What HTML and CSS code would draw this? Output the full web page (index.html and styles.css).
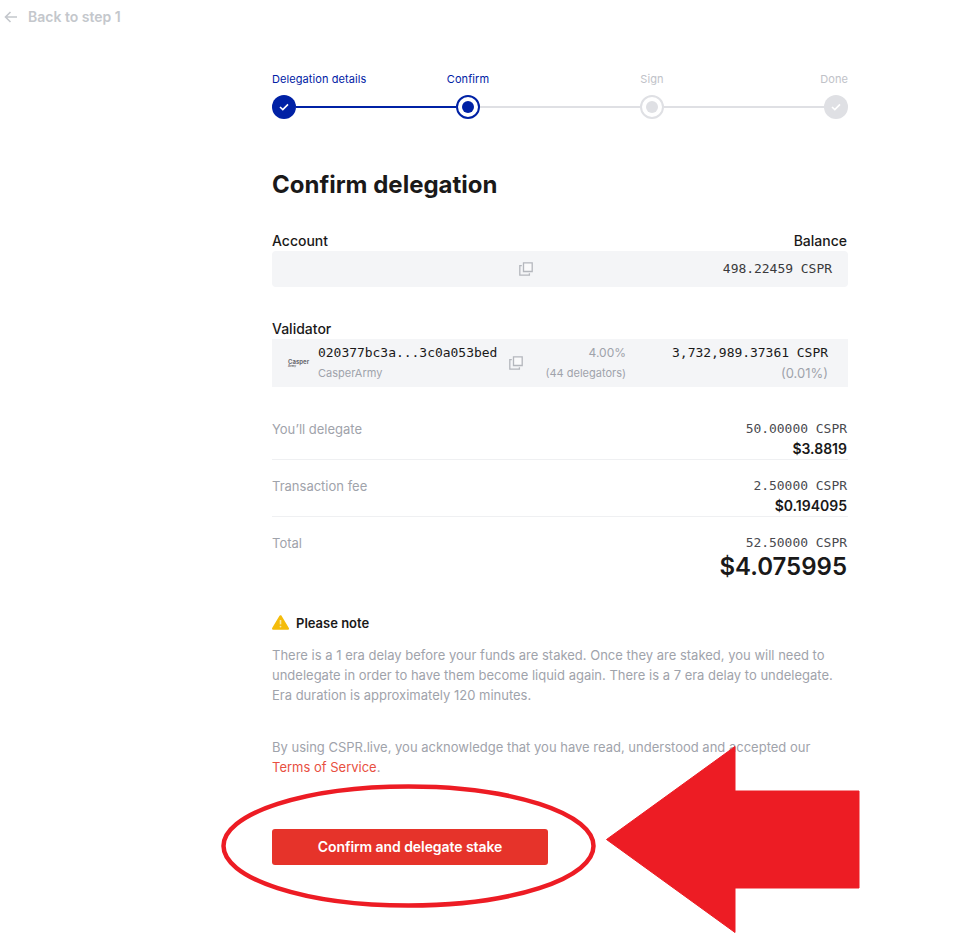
FILE: index.html
```html
<!DOCTYPE html>
<html lang="en">
<head>
<meta charset="utf-8">
<title>Confirm delegation</title>
<link rel="stylesheet" href="styles.css">
</head>
<body>
<a class="back" href="#">
  <svg class="back-icon" width="14" height="12" viewBox="0 0 14 12"><path d="M13 6H1.5M6.5 1 1.5 6l5 5" fill="none" stroke="#c4c7cc" stroke-width="1.6"/></svg>
  <span>Back to step 1</span>
</a>
<main class="page">
  <section class="stepper">
    <div class="step-labels">
      <div class="step-label first active">Delegation details</div>
      <div class="step-label active">Confirm</div>
      <div class="step-label">Sign</div>
      <div class="step-label last">Done</div>
    </div>
    <div class="track">
      <span class="dot done"><svg width="10" height="8" viewBox="0 0 10 8"><path d="M1 4l2.8 2.6L9 1.4" fill="none" stroke="#fff" stroke-width="1.6"/></svg></span>
      <span class="line line-on"></span>
      <span class="dot current"><i></i></span>
      <span class="line"></span>
      <span class="dot pending"><i></i></span>
      <span class="line"></span>
      <span class="dot future"><svg width="10" height="8" viewBox="0 0 10 8"><path d="M1 4l2.8 2.6L9 1.4" fill="none" stroke="#fff" stroke-width="1.6"/></svg></span>
    </div>
  </section>

  <h1 class="title">Confirm delegation</h1>

  <div class="label-row"><span>Account</span><span>Balance</span></div>
  <div class="panel account">
    <span class="account-copy">
      <svg class="copy" width="14" height="14" viewBox="0 0 14 14"><path d="M4.500.8h8.700v8.700H4.500z" fill="#fafafb" stroke="#b4b7bd" stroke-width="1.3"/><path d="M2.800 3.600H.8v9.600h9.600v-2" fill="none" stroke="#b4b7bd" stroke-width="1.3"/></svg>
    </span>
    <span class="mono account-balance">498.22459 CSPR</span>
  </div>

  <div class="label-row validator-label"><span>Validator</span></div>
  <div class="panel validator">
    <div class="logo"><span class="logo-a">Casper</span><span class="logo-b">Army</span></div>
    <div class="val-id">
      <div class="mono dark">020377bc3a...3c0a053bed</div>
      <div class="muted small">CasperArmy</div>
    </div>
    <svg class="copy val-copy" width="14" height="14" viewBox="0 0 14 14"><path d="M4.500.8h8.700v8.700H4.500z" fill="#fafafb" stroke="#b4b7bd" stroke-width="1.3"/><path d="M2.800 3.600H.8v9.600h9.600v-2" fill="none" stroke="#b4b7bd" stroke-width="1.3"/></svg>
    <div class="val-fee">
      <div class="muted">4.00%</div>
      <div class="muted small">(44 delegators)</div>
    </div>
    <div class="val-stake">
      <div class="mono dark">3,732,989.37361 CSPR</div>
      <div class="muted">(0.01%)</div>
    </div>
  </div>

  <div class="rows">
    <div class="row ruled">
      <span class="muted">You’ll delegate</span>
      <div class="amount"><div class="mono">50.00000 CSPR</div><div class="usd">$3.8819</div></div>
    </div>
    <div class="row ruled">
      <span class="muted">Transaction fee</span>
      <div class="amount"><div class="mono">2.50000 CSPR</div><div class="usd">$0.194095</div></div>
    </div>
    <div class="row">
      <span class="muted">Total</span>
      <div class="amount"><div class="mono">52.50000 CSPR</div><div class="usd total">$4.075995</div></div>
    </div>
  </div>

  <div class="note-head">
    <svg class="note-icon" width="17" height="15" viewBox="0 0 17 15"><path d="M8.500 1.400 15.800 13.600H1.200z" fill="#f4bc0b" stroke="#f4bc0b" stroke-width="2.4" stroke-linejoin="round"/><path d="M8.500 5v4.400" stroke="#fbe7a6" stroke-width="1.6"/><circle cx="8.500" cy="11.600" r=".9" fill="#fbe7a6"/></svg>
    <span>Please note</span>
  </div>
  <p class="text note-text">There is a 1 era delay before your funds are staked. Once they are staked, you will need to undelegate in order to have them become liquid again. There is a 7 era delay to undelegate. Era duration is approximately 120 minutes.</p>
  <p class="text terms">By using CSPR.live, you acknowledge that you have read, understood and accepted our <a href="#">Terms of Service</a>.</p>
  <button class="confirm" type="button">Confirm and delegate stake</button>
</main>
<svg class="annotation" width="968" height="938" viewBox="0 0 968 938">
  <ellipse cx="408.5" cy="846" rx="185" ry="59.5" fill="none" stroke="#ed1c24" stroke-width="4.5"/>
  <path d="M606.500 839.500 735 746.500V791h124v97H735v44.500z" fill="#ed1c24" stroke="#ed1c24" stroke-width="1" stroke-linejoin="round"/>
</svg>
</body>
</html>
```
FILE: styles.css
```css
* { box-sizing: border-box; }
html, body { margin: 0; height: 938px; overflow: hidden; }
body { position: relative; background: #fff; font-family: Inter, "Noto Sans", sans-serif; font-size: 13px; line-height: 20px; color: #1a1919; }
.back { display: flex; align-items: center; gap: 10px; height: 20px; margin: 7px 0 0 4px; font-size: 14px; font-weight: 600; color: #c4c7cc; text-decoration: none; }
.page { width: 576px; margin: 42px 0 0 272px; }
.step-labels { display: flex; justify-content: space-between; height: 20px; }
.step-label { width: 24px; display: flex; justify-content: center; white-space: nowrap; font-size: 11px; font-weight: 400; line-height: 20px; letter-spacing: .08px; color: #c0c2c8; }
.step-label.first { justify-content: flex-start; }
.step-label.last { justify-content: flex-end; }
.step-label.active { color: #0021a5; }
.track { display: flex; align-items: center; height: 24px; margin-top: 6px; }
.line { flex: 1; height: 2px; background: #dfe0e4; }
.line-on { background: #0021a5; }
.dot { width: 24px; height: 24px; border-radius: 50%; display: flex; align-items: center; justify-content: center; flex: none; }
.dot.done { background: #0021a5; }
.dot.future { background: #dfe0e4; }
.dot.current { border: 2px solid #0021a5; }
.dot.current i { width: 12px; height: 12px; border-radius: 50%; background: #0021a5; }
.dot.pending { border: 2px solid #dfe0e4; }
.dot.pending i { width: 12px; height: 12px; border-radius: 50%; background: #dfe0e4; }
.title { margin: 50px 0 0; font-size: 24px; font-weight: 700; line-height: 32px; color: #1a1919; }
.label-row { display: flex; justify-content: space-between; margin-top: 30px; height: 20px; font-size: 14px; font-weight: 500; line-height: 20px; padding-right: 1px; }
.validator-label { margin-top: 32px; }
.panel { background: #f4f5f7; border-radius: 4px; display: flex; align-items: center; }
.account { height: 36px; margin-top: 0; }
.account-copy { width: 261px; display: flex; justify-content: flex-end; }
.account-balance { margin-left: auto; padding-right: 16px; color: #3a3a3c; }
.validator { height: 48px; border-radius: 0; }
.logo { width: 46px; padding-left: 16px; display: flex; flex-direction: column; gap: 1px; font-size: 6px; line-height: 5px; font-weight: 700; color: #6a6a70; }
.logo-b { font-size: 3px; line-height: 3px; }
.val-id { width: 190px; }
.val-copy { margin-left: 1px; }
.val-fee { width: 103px; text-align: right; font-size: 12px; }
.val-stake { flex: 1; text-align: right; padding-right: 20px; }
.mono { font-family: "DejaVu Sans Mono", "Liberation Mono", monospace; font-size: 13px; line-height: 20px; letter-spacing: -.03px; }
.dark { color: #1a1919; }
.muted { color: #9fa3ab; }
.small { font-size: 11px; }
.rows { margin-top: 32px; }
.row { display: flex; justify-content: space-between; align-items: flex-start; }
.row.ruled { height: 41px; margin-bottom: 16px; border-bottom: 1px solid #eff0f2; }
.amount { text-align: right; color: #4a4a4f; padding-right: 1px; }
.usd { font-size: 14px; font-weight: 600; line-height: 20px; color: #1a1919; }
.usd.total { font-size: 24px; line-height: 28px; }
.note-head { display: flex; align-items: center; gap: 7px; margin-top: 32px; height: 20px; font-size: 13px; font-weight: 600; }
.note-icon { margin-top: -2px; }
.text { margin: 0; color: #9fa3ab; font-size: 13px; line-height: 20px; }
.note-text { margin-top: 12px; }
.terms { margin-top: 32px; }
.terms a { color: #e8503f; text-decoration: none; }
.confirm { display: block; width: 276px; height: 36px; margin-top: 52px; border: 0; border-radius: 3px; background: #e6332a; color: #fff; font: 600 14px/20px Inter, sans-serif; letter-spacing: -.07px; }
.annotation { position: absolute; left: 0; top: 0; pointer-events: none; }
```
